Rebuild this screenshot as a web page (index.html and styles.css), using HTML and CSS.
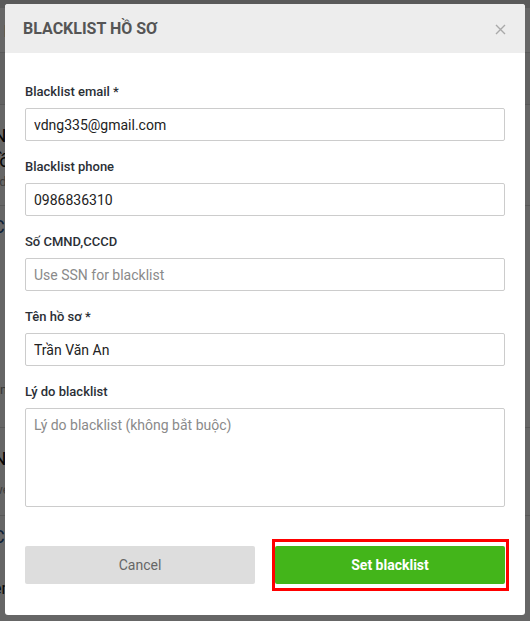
FILE: index.html
```html
<!DOCTYPE html>
<html lang="vi">
<head>
<meta charset="utf-8">
<title>Blacklist hồ sơ</title>
<link rel="stylesheet" href="styles.css">
</head>
<body>
<div class="page">
  <div class="page-top"></div>
  <div class="page-crumb">/ Hồ sơ</div>
  <div class="page-row"></div>
  <div class="card">
    <div class="card-title">Nguyễn Văn</div>
    <div class="card-title">rồng</div>
    <div class="card-sub">vdng@gmail.com</div>
  </div>
  <div class="card-link">Chi tiết</div>
  <div class="card-gap"></div>
  <div class="card-sub2">ần Văn</div>
  <div class="card">
    <div class="card-title">Nguyễn Thị</div>
    <div class="card-sub card-sub-b">web</div>
  </div>
  <div class="card-link">Chi tiết</div>
  <div class="card-plain">email</div>
</div>
<div class="overlay"></div>

<div class="modal">
  <div class="modal-header">
    <h1 class="modal-title">BLACKLIST HỒ SƠ</h1>
    <button class="close" type="button" aria-label="Close">
      <svg width="11" height="11" viewBox="0 0 11 11"><path d="M1 1 L10 10 M10 1 L1 10" stroke="#a9a9a9" stroke-width="1.4" fill="none"/></svg>
    </button>
  </div>
  <div class="modal-body">
    <div class="field">
      <label class="label">Blacklist email *</label>
      <input class="input" type="text" value="vdng335@gmail.com">
    </div>
    <div class="field">
      <label class="label">Blacklist phone</label>
      <input class="input" type="text" value="0986836310">
    </div>
    <div class="field">
      <label class="label">Số CMND,CCCD</label>
      <input class="input" type="text" placeholder="Use SSN for blacklist">
    </div>
    <div class="field">
      <label class="label">Tên hồ sơ *</label>
      <input class="input" type="text" value="Trần Văn An">
    </div>
    <div class="field field-last">
      <label class="label">Lý do blacklist</label>
      <textarea class="textarea" placeholder="Lý do blacklist (không bắt buộc)"></textarea>
    </div>
    <div class="actions">
      <button class="btn btn-cancel" type="button">Cancel</button>
      <div class="highlight">
        <button class="btn btn-primary" type="button">Set blacklist</button>
      </div>
    </div>
  </div>
</div>
</body>
</html>
```

FILE: styles.css
```css
* { box-sizing: border-box; }

body {
  margin: 0;
  width: 530px;
  height: 621px;
  overflow: hidden;
  background: #ffffff;
  font-family: Roboto, "Noto Sans", "Liberation Sans", sans-serif;
}

/* underlying page (mostly covered) */
.page {
  margin-left: -7px;
  font-size: 16px;
  color: #111;
}
.page-top { height: 8px; background: #e0e0e0; }
.page-crumb { height: 44px; padding-top: 14px; color: #999; font-size: 16px; }
.page-row { height: 53px; border-top: 1px solid #dcdcdc; border-bottom: 1px solid #dcdcdc; background: #f6f6f6; }
.card { padding-top: 18px; }
.card-title { font-size: 19px; line-height: 25px; }
.card-sub { font-size: 13px; color: #999; line-height: 18px; padding-bottom: 14px; border-bottom: 1px solid #ddd; }
.card-sub-b { margin-top: 10px; padding-bottom: 16px; }
.card-link { color: #1c4e8a; font-size: 18px; padding: 10px 0; }
.card-gap { height: 135px; }
.card-sub2 { font-size: 13px; color: #888; height: 46px; border-bottom: 1px solid #ddd; }
.card-plain { font-size: 16px; padding-top: 22px; }

.overlay {
  position: fixed;
  inset: 0;
  background: rgba(0, 0, 0, 0.6);
}

/* modal */
.modal {
  position: fixed;
  left: 5px;
  top: 4px;
  width: 520px;
  height: 611px;
  background: #ffffff;
  border-radius: 3px;
  overflow: hidden;
}

.modal-header {
  height: 49px;
  background: #ededed;
  display: flex;
  align-items: center;
  justify-content: space-between;
  padding: 0 19px 0 18px;
}

.modal-title {
  margin: 0;
  font-size: 16px;
  font-weight: 700;
  color: #555555;
}

.close {
  border: 0;
  background: transparent;
  padding: 0;
  width: 11px;
  height: 11px;
  display: flex;
  margin-top: 1px;
}

.modal-body {
  padding: 31px 20px 0 20px;
}

.field {
  display: flex;
  flex-direction: column;
  margin-bottom: 18px;
}
.field-last { margin-bottom: 0; }

.label {
  font-size: 13px;
  line-height: 15px;
  font-weight: 500;
  color: #2b2f36;
  margin-bottom: 9px;
}

.input,
.textarea {
  width: 100%;
  border: 1px solid #cccccc;
  border-radius: 2px;
  font-family: Roboto, "Noto Sans", "Liberation Sans", sans-serif;
  font-size: 14px;
  color: #222;
  background: #fff;
  padding: 0 8px;
}

.input { height: 33px; }

.textarea {
  height: 99px;
  padding: 6px 8px;
  line-height: 20px;
  resize: none;
  display: block;
}

.input::placeholder,
.textarea::placeholder { color: #8a8a8a; opacity: 1; }

.actions {
  display: grid;
  grid-template-columns: 1fr 1fr;
  column-gap: 20px;
  margin-top: 39px;
}

.btn {
  height: 38px;
  width: 100%;
  border: 0;
  border-radius: 2px;
  font-family: Roboto, "Noto Sans", "Liberation Sans", sans-serif;
  font-size: 14px;
  display: block;
}

.btn-cancel {
  background: #dddddd;
  color: #666666;
}

.btn-primary {
  background: #43b51a;
  color: #ffffff;
  font-weight: 700;
}

.highlight {
  position: relative;
}
.highlight::after {
  content: "";
  position: absolute;
  left: -3px;
  right: -4px;
  top: -7px;
  bottom: -7px;
  border: 3px solid #ff0000;
  pointer-events: none;
}
```
